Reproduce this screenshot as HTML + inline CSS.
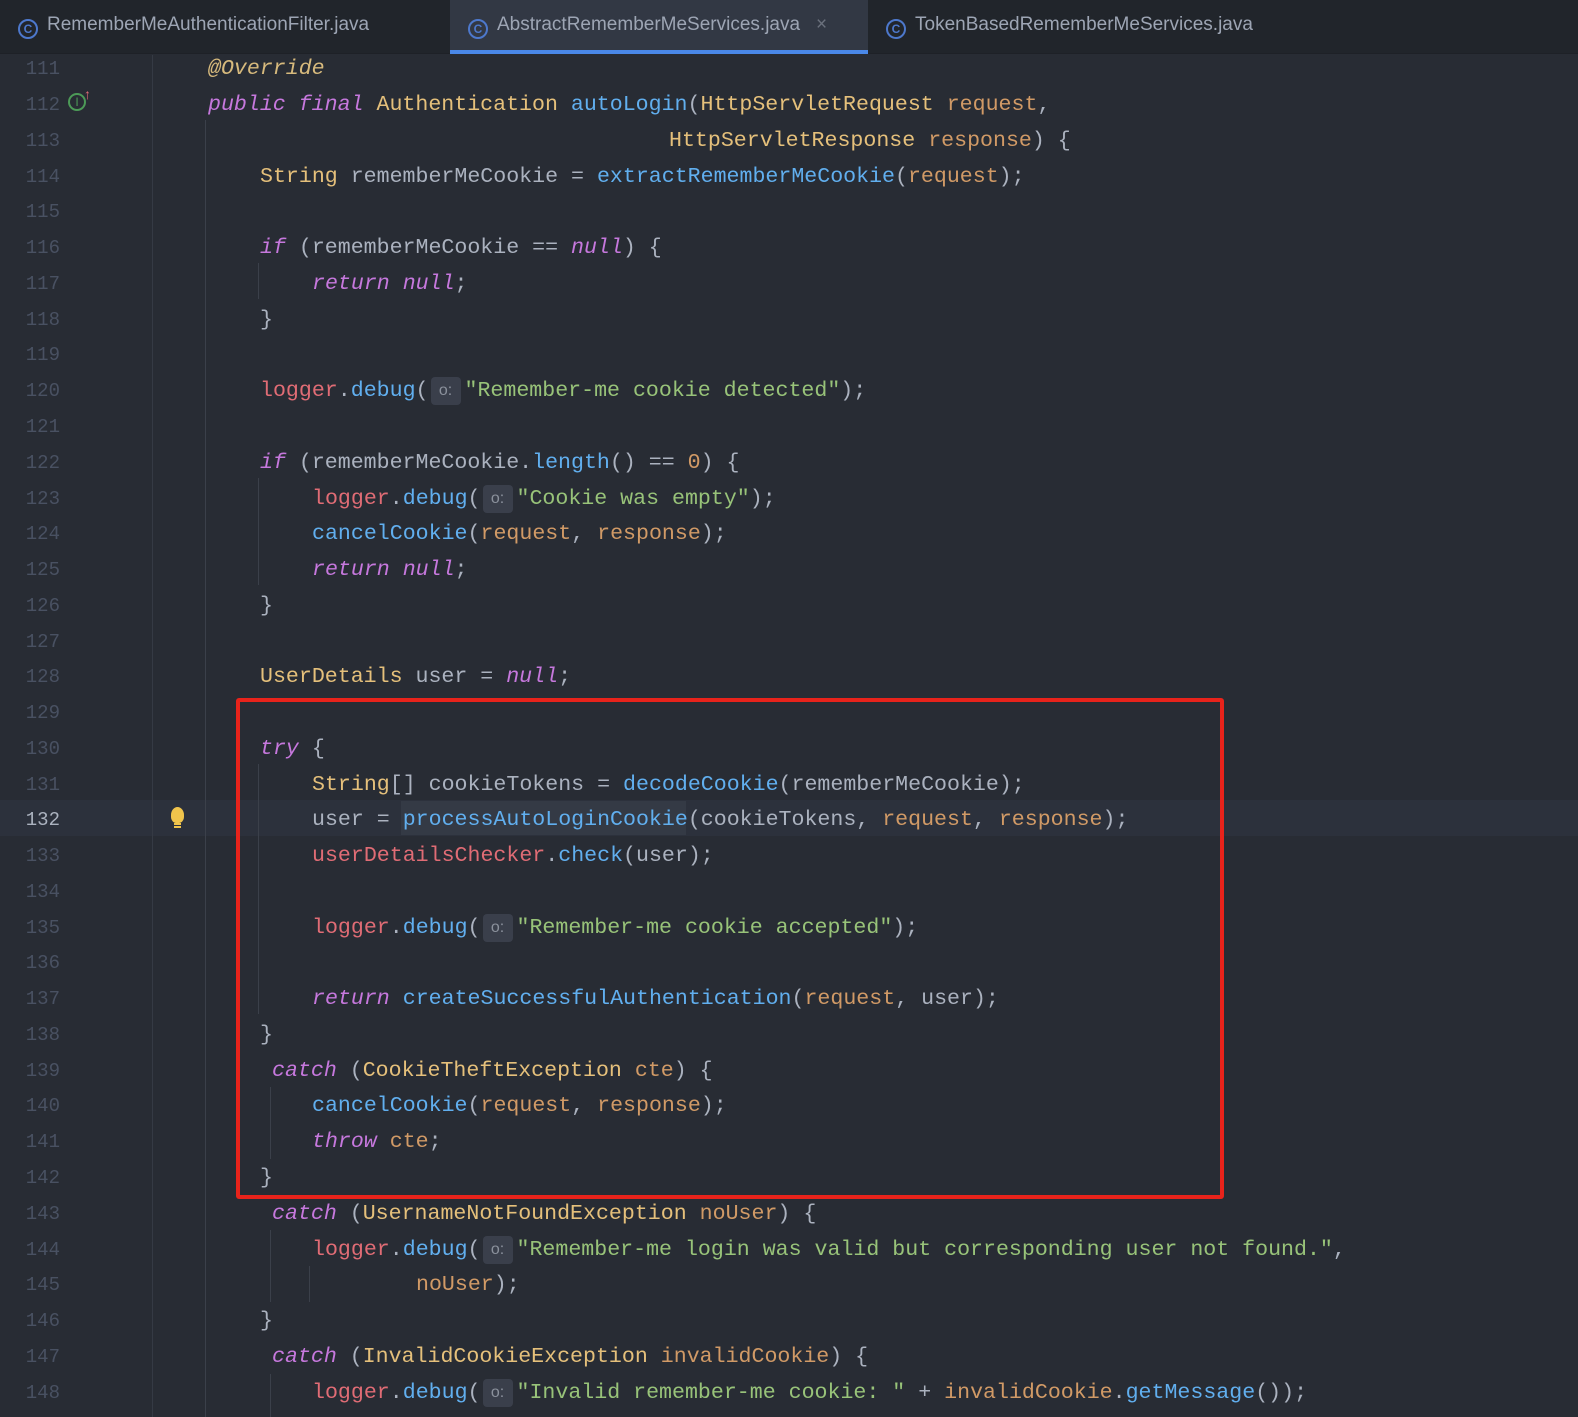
<!DOCTYPE html>
<html><head><meta charset="utf-8"><style>
*{margin:0;padding:0;box-sizing:border-box}
body{width:1578px;height:1417px;background:#282c34;overflow:hidden;position:relative;font-family:"Liberation Mono",monospace}
.tabs{position:absolute;left:0;top:0;width:1578px;height:54px;background:#21252b;border-bottom:1px solid #1e2127}
.tab{position:absolute;top:0;height:54px;font-family:"Liberation Sans",sans-serif;font-size:19px;color:#9da5b4;line-height:50px;white-space:nowrap}
.tab .ic{display:inline-block;width:20px;height:20px;border:2px solid #4d78cc;border-radius:50%;color:#4d78cc;font-size:12px;line-height:16px;text-align:center;vertical-align:-3px;margin-right:9px;font-weight:bold}
.act{background:#323844;border-bottom:4px solid #4a88e8}
.ln{position:absolute;left:0;width:60px;text-align:right;color:#495162;font-size:19px;height:36px;line-height:36px;margin-top:2px}
.c{position:absolute;font-size:21.6px;color:#abb2bf;white-space:pre;height:36px;line-height:36px;margin-top:2px}
.k{color:#c678dd;font-style:italic}.t{color:#e5c07b}.f{color:#61afef}.r{color:#e06c75}.s{color:#98c379}.p{color:#d19a66}.a{color:#d7ba7d;font-style:italic}
.h{display:inline-block;width:30px;height:28px;line-height:28px;background:#3a3f4b;border-radius:4px;color:#8b919c;font-family:"Liberation Sans",sans-serif;font-size:16px;text-align:center;margin:0 4px 0 2px;vertical-align:1px}
.g{position:absolute;width:1px;background:#3b404a}
</style></head><body>
<div style="position:absolute;left:0;top:800px;width:1578px;height:36px;background:#2c313c"></div>
<div class="g" style="left:152px;top:55px;height:1362px;background:#353a44"></div>
<div class="g" style="left:205px;top:120px;height:1297px"></div>
<div class="g" style="left:258px;top:263px;height:36px"></div>
<div class="g" style="left:258px;top:478px;height:107px"></div>
<div class="g" style="left:258px;top:764px;height:250px"></div>
<div class="g" style="left:270px;top:1087px;height:72px"></div>
<div class="g" style="left:270px;top:1230px;height:72px"></div>
<div class="g" style="left:309px;top:1266px;height:36px"></div>
<div class="g" style="left:270px;top:1374px;height:43px"></div>
<div class="tabs">
<div class="tab" style="left:0;width:450px;padding-left:18px"><span class="ic">C</span>RememberMeAuthenticationFilter.java</div>
<div class="tab act" style="left:450px;width:418px;padding-left:18px"><span class="ic">C</span>AbstractRememberMeServices.java<span style="color:#6b717d;margin-left:16px">×</span></div>
<div class="tab" style="left:868px;width:450px;padding-left:18px"><span class="ic">C</span>TokenBasedRememberMeServices.java</div>
</div>
<div class="ln" style="top:49px">111</div><div class="c" style="left:208px;top:49px"><span class="a">@Override</span></div>
<div class="ln" style="top:85px">112</div><div style="position:absolute;left:68px;top:93px;width:18px;height:18px;border:2px solid #4c9a57;border-radius:50%;color:#4c9a57;font-size:12px;text-align:center;line-height:14px;font-family:'Liberation Sans'">I</div><div style="position:absolute;left:84px;top:86px;color:#e06c75;font-size:14px;font-family:'Liberation Sans'">↑</div>
<div class="c" style="left:208px;top:85px"><span class="k">public final</span> <span class="t">Authentication</span> <span class="f">autoLogin</span>(<span class="t">HttpServletRequest</span> <span class="p">request</span>,</div>
<div class="ln" style="top:121px">113</div><div class="c" style="left:669px;top:121px"><span class="t">HttpServletResponse</span> <span class="p">response</span>) {</div>
<div class="ln" style="top:157px">114</div><div class="c" style="left:260px;top:157px"><span class="t">String</span> rememberMeCookie = <span class="f">extractRememberMeCookie</span>(<span class="p">request</span>);</div>
<div class="ln" style="top:192px">115</div>
<div class="ln" style="top:228px">116</div><div class="c" style="left:260px;top:228px"><span class="k">if</span> (rememberMeCookie == <span class="k">null</span>) {</div>
<div class="ln" style="top:264px">117</div><div class="c" style="left:312px;top:264px"><span class="k">return null</span>;</div>
<div class="ln" style="top:300px">118</div><div class="c" style="left:260px;top:300px">}</div>
<div class="ln" style="top:335px">119</div>
<div class="ln" style="top:371px">120</div><div class="c" style="left:260px;top:371px"><span class="r">logger</span>.<span class="f">debug</span>(<span class="h">o:</span><span class="s">"Remember-me cookie detected"</span>);</div>
<div class="ln" style="top:407px">121</div>
<div class="ln" style="top:443px">122</div><div class="c" style="left:260px;top:443px"><span class="k">if</span> (rememberMeCookie.<span class="f">length</span>() == <span class="p">0</span>) {</div>
<div class="ln" style="top:479px">123</div><div class="c" style="left:312px;top:479px"><span class="r">logger</span>.<span class="f">debug</span>(<span class="h">o:</span><span class="s">"Cookie was empty"</span>);</div>
<div class="ln" style="top:514px">124</div><div class="c" style="left:312px;top:514px"><span class="f">cancelCookie</span>(<span class="p">request</span>, <span class="p">response</span>);</div>
<div class="ln" style="top:550px">125</div><div class="c" style="left:312px;top:550px"><span class="k">return null</span>;</div>
<div class="ln" style="top:586px">126</div><div class="c" style="left:260px;top:586px">}</div>
<div class="ln" style="top:622px">127</div>
<div class="ln" style="top:657px">128</div><div class="c" style="left:260px;top:657px"><span class="t">UserDetails</span> user = <span class="k">null</span>;</div>
<div class="ln" style="top:693px">129</div>
<div class="ln" style="top:729px">130</div><div class="c" style="left:260px;top:729px"><span class="k">try</span> {</div>
<div class="ln" style="top:765px">131</div><div class="c" style="left:312px;top:765px"><span class="t">String</span>[] cookieTokens = <span class="f">decodeCookie</span>(rememberMeCookie);</div>
<div class="ln" style="top:800px;color:#abb2bf">132</div>
<div style="position:absolute;left:171px;top:807px;width:13px;height:16px;background:#f0c44c;border-radius:50% 50% 40% 40%"></div><div style="position:absolute;left:174px;top:823px;width:7px;height:5px;border-top:2px solid #f0c44c;border-bottom:2px solid #f0c44c"></div>
<div style="position:absolute;left:401px;top:801px;width:285px;height:34px;background:#343a45"></div>
<div class="c" style="left:312px;top:800px">user = <span class="f">processAutoLoginCookie</span>(cookieTokens, <span class="p">request</span>, <span class="p">response</span>);</div>
<div class="ln" style="top:836px">133</div><div class="c" style="left:312px;top:836px"><span class="r">userDetailsChecker</span>.<span class="f">check</span>(user);</div>
<div class="ln" style="top:872px">134</div>
<div class="ln" style="top:908px">135</div><div class="c" style="left:312px;top:908px"><span class="r">logger</span>.<span class="f">debug</span>(<span class="h">o:</span><span class="s">"Remember-me cookie accepted"</span>);</div>
<div class="ln" style="top:943px">136</div>
<div class="ln" style="top:979px">137</div><div class="c" style="left:312px;top:979px"><span class="k">return</span> <span class="f">createSuccessfulAuthentication</span>(<span class="p">request</span>, user);</div>
<div class="ln" style="top:1015px">138</div><div class="c" style="left:260px;top:1015px">}</div>
<div class="ln" style="top:1051px">139</div><div class="c" style="left:272px;top:1051px"><span class="k">catch</span> (<span class="t">CookieTheftException</span> <span class="p">cte</span>) {</div>
<div class="ln" style="top:1086px">140</div><div class="c" style="left:312px;top:1086px"><span class="f">cancelCookie</span>(<span class="p">request</span>, <span class="p">response</span>);</div>
<div class="ln" style="top:1122px">141</div><div class="c" style="left:312px;top:1122px"><span class="k">throw</span> <span class="p">cte</span>;</div>
<div class="ln" style="top:1158px">142</div><div class="c" style="left:260px;top:1158px">}</div>
<div class="ln" style="top:1194px">143</div><div class="c" style="left:272px;top:1194px"><span class="k">catch</span> (<span class="t">UsernameNotFoundException</span> <span class="p">noUser</span>) {</div>
<div class="ln" style="top:1230px">144</div><div class="c" style="left:312px;top:1230px"><span class="r">logger</span>.<span class="f">debug</span>(<span class="h">o:</span><span class="s">"Remember-me login was valid but corresponding user not found."</span>,</div>
<div class="ln" style="top:1265px">145</div><div class="c" style="left:416px;top:1265px"><span class="p">noUser</span>);</div>
<div class="ln" style="top:1301px">146</div><div class="c" style="left:260px;top:1301px">}</div>
<div class="ln" style="top:1337px">147</div><div class="c" style="left:272px;top:1337px"><span class="k">catch</span> (<span class="t">InvalidCookieException</span> <span class="p">invalidCookie</span>) {</div>
<div class="ln" style="top:1373px">148</div><div class="c" style="left:312px;top:1373px"><span class="r">logger</span>.<span class="f">debug</span>(<span class="h">o:</span><span class="s">"Invalid remember-me cookie: "</span> + <span class="p">invalidCookie</span>.<span class="f">getMessage</span>());</div>
<div style="position:absolute;left:236px;top:698px;width:988px;height:501px;border:4px solid #e8231b;border-radius:3px"></div>
</body></html>
